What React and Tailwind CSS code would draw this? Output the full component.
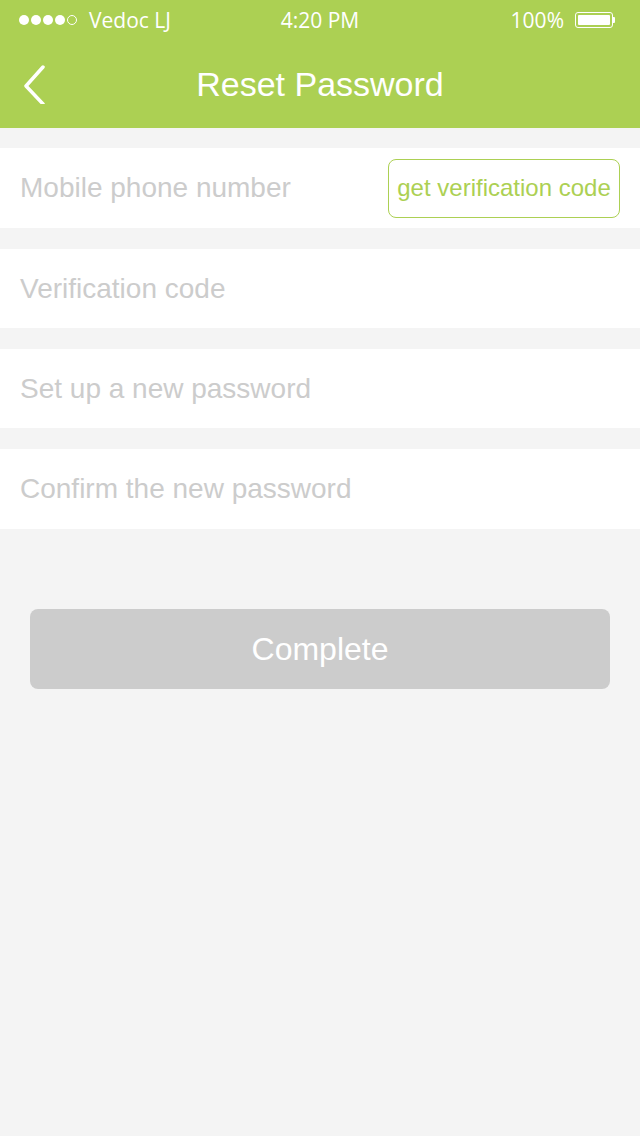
export default function App() {
  const rows = [
    { t: "Verification code", h: "h-[79px]" },
    { t: "Set up a new password", h: "h-[79px]" },
    { t: "Confirm the new password", h: "h-[80px]" },
  ];
  return (
    <div className="w-[640px] h-[1136px] bg-[#f4f4f4] flex flex-col" style={{ fontFamily: '"Liberation Sans", Arial, sans-serif' }}>
      <div className="bg-[#acd053] h-[128px] flex flex-col">
        <div className="h-[40px] flex items-center pl-[19px] pr-[25px] text-white text-[21px] relative" style={{ fontFamily: '"Open Sans", sans-serif' }}>
          <div className="flex items-center gap-[2px]">
            <span className="w-[10px] h-[10px] rounded-full bg-white"></span>
            <span className="w-[10px] h-[10px] rounded-full bg-white"></span>
            <span className="w-[10px] h-[10px] rounded-full bg-white"></span>
            <span className="w-[10px] h-[10px] rounded-full bg-white"></span>
            <span className="w-[10px] h-[10px] rounded-full border border-white"></span>
            <span className="ml-[10px] leading-none">Vedoc LJ</span>
          </div>
          <div className="absolute left-0 right-0 text-center leading-none">4:20 PM</div>
          <div className="ml-auto flex items-center gap-[11px]">
            <span className="leading-none">100%</span>
            <div className="flex items-center">
              <div className="w-[38px] h-[16px] border border-white rounded-[3px] p-[2px]">
                <div className="w-full h-full bg-white rounded-[1px]"></div>
              </div>
              <div className="w-[2px] h-[6px] bg-white rounded-r-[1px]"></div>
            </div>
          </div>
        </div>
        <div className="flex-1 flex items-center relative">
          <svg className="absolute left-[22px]" width="24" height="40" viewBox="0 0 24 40" fill="none">
            <path d="M21 3 L4 22 L21 40" stroke="white" strokeWidth="3.5" strokeLinecap="round" strokeLinejoin="round" />
          </svg>
          <div className="w-full text-center text-white text-[34px] leading-none">Reset Password</div>
        </div>
      </div>
      <div className="mt-[20px] flex flex-col gap-[21px]">
        <div className="bg-white h-[80px] flex items-center pl-[20px] pr-[20px]">
          <span className="text-[#cccccc] text-[28px] flex-1">Mobile phone number</span>
          <div className="h-[59px] w-[232px] border border-[#acd053] rounded-[8px] flex items-center justify-center text-[#acd053] text-[24px]">
            get verification code
          </div>
        </div>
        {rows.map((r) => (
          <div key={r.t} className={`bg-white ${r.h} flex items-center px-[20px]`}>
            <span className="text-[#cccccc] text-[28px]">{r.t}</span>
          </div>
        ))}
      </div>
      <div className="mt-[80px] mx-[30px] h-[80px] bg-[#cccccc] rounded-[8px] flex items-center justify-center text-white text-[32px]">
        Complete
      </div>
    </div>
  );
}
